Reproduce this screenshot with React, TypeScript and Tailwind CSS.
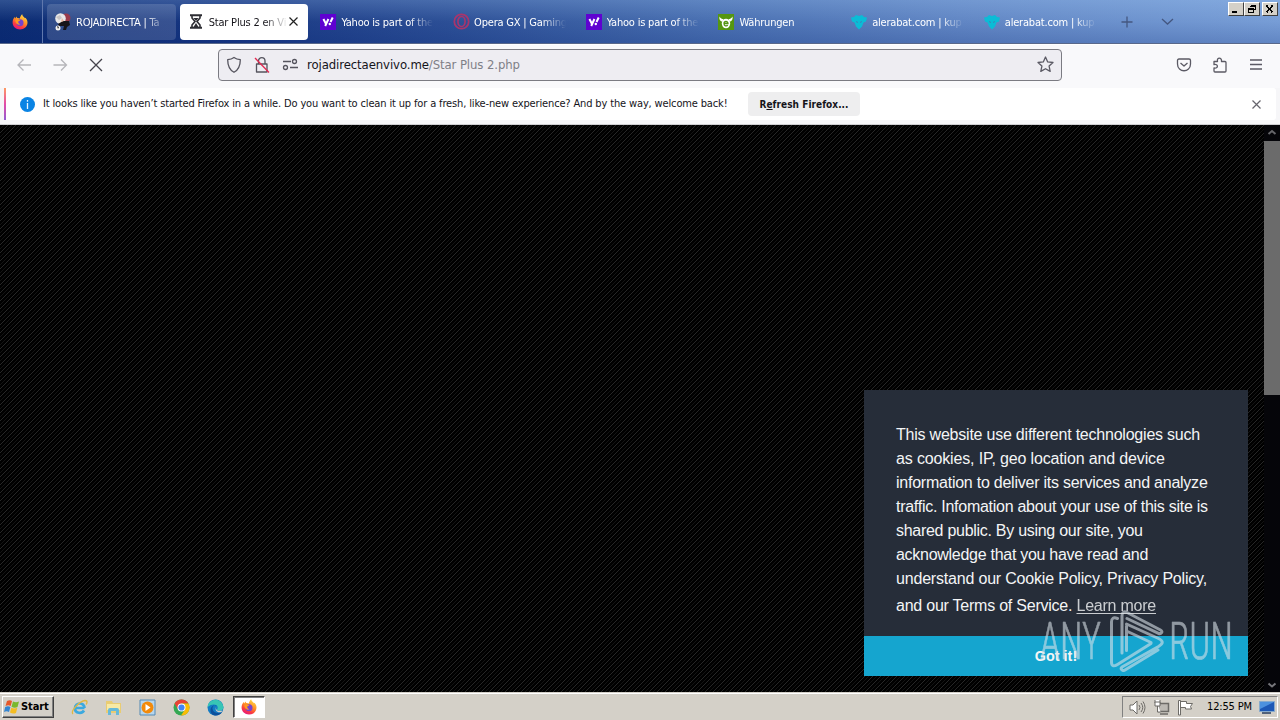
import type { ReactNode } from 'react';

const ui = "font-['DejaVu_Sans_Condensed','DejaVu_Sans',sans-serif] [font-stretch:condensed]";

function FirefoxIcon({ size = 16 }: { size?: number }) {
    return (
        <svg width={size} height={size} viewBox="0 0 16 16">
            <defs>
                <linearGradient id="fox" x1="0.8" y1="0" x2="0.3" y2="1">
                    <stop offset="0" stopColor="#ffe14a" />
                    <stop offset="0.45" stopColor="#ff9226" />
                    <stop offset="0.75" stopColor="#fb3b3f" />
                    <stop offset="1" stopColor="#e31587" />
                </linearGradient>
            </defs>
            <path d="M8 15.6C3.8 15.6.6 12.6.6 8.6.6 6.6 1.3 4.5 2.7 3.1L3.3 4.5 4.3 2.6 5.3 4.1C6.2 3.9 7.2 4.1 7.8 4.6 8.1 3 8.9 1.3 10.2.3 10.4 2.2 12 2.9 13 4.3L13.5 3.7C14.9 5.2 15.5 6.8 15.5 8.6 15.5 12.6 12.2 15.6 8 15.6Z" fill="url(#fox)" />
            <circle cx="8" cy="8.8" r="3.5" fill="#7543cf" />
            <path d="M3.2 6.1C4.6 4.9 6.8 5.1 8.3 6.5L6.5 7.3C5.8 8.3 6.5 10 8.3 10.1 7 11.5 3.3 10.5 3.2 6.1Z" fill="#ff9a1f" />
        </svg>
    );
}

function RojaIcon() {
    return (
        <svg className="shrink-0" width="18" height="18" viewBox="0 0 18 18">
            <circle cx="12" cy="5" r="4.5" fill="#9a3b4b" />
            <circle cx="6.5" cy="5.5" r="5.3" fill="#e9e8e8" />
            <path d="M2 4 6 2 8 5 5 7Z" fill="#c8c4c4" />
            <path d="M4 11 9 8 15 8 16 12 13 14 12 17 9 17 10 13 5 13Z" fill="#171419" />
            <circle cx="4" cy="15" r="2.5" fill="#f2f2f2" />
            <path d="m3 13 2 1-1 2Z" fill="#222" />
            <path d="m8 5 2 3-3 1Z" fill="#eab6a0" />
        </svg>
    );
}

function HourglassIcon() {
    return (
        <svg width="14" height="15" viewBox="0 0 14 15" fill="none" stroke="#2d2d33" strokeWidth="1.6">
            <path d="M1 1.2h12M1 13.8h12" strokeWidth="2" />
            <path d="M3 1.5v2.5L6 7.5 3 11v2.5M11 1.5v2.5L8 7.5l3 3.5v2.5" />
            <path d="M4.5 4h5L7 7Z M7 9l2.5 4h-5Z" fill="#2d2d33" stroke="none" />
        </svg>
    );
}

function YahooIcon() {
    return (
        <svg width="16" height="16" viewBox="0 0 16 16">
            <path fill="#5f01d1" d="M0 0h16v16H0z" />
            <path d="m3.4 5 2.500 4.800m2.500-4.800L5.200 12M12.700 3.500 10.500 8" stroke="#fff" strokeWidth="2" fill="none" />
            <circle cx="9.800" cy="10" r="1.200" fill="#fff" />
        </svg>
    );
}

function OperaIcon() {
    return (
        <svg className="shrink-0" width="17" height="17" viewBox="0 0 17 17" fill="none" stroke="#a8356c">
            <circle cx="8.5" cy="8.5" r="7.2" strokeWidth="1.8" />
            <ellipse cx="8.5" cy="8.5" rx="3.6" ry="5" strokeWidth="1.7" />
        </svg>
    );
}

function BullIcon() {
    return (
        <svg width="16" height="16" viewBox="0 0 16 16">
            <path fill="#559611" d="M0 0h16v16H0z" />
            <path d="M1.500 2.500C1 6 2.500 7.500 4.500 7.500L5.500 5C4 5 2.500 4.500 1.500 2.500ZM14.500 2.500C15 6 13.500 7.500 11.500 7.500L10.500 5C12 5 13.500 4.500 14.500 2.500Z" fill="#fff" />
            <ellipse cx="8" cy="9.500" rx="4.200" ry="4.800" fill="#fff" />
            <path d="M6 9.500h4C10 6.800 6 6.800 6 9.500c0 2.800 2.600 2.800 3.800 1.800" stroke="#559611" strokeWidth="1.300" fill="none" />
        </svg>
    );
}

function AlerabatIcon() {
    return (
        <svg width="16" height="16" viewBox="0 0 16 16">
            <path d="M0 3.500 3 3 5 1 8 2 11 1l2 2 3 .5-1 4-2.500 1-1.500 4L8 15.500 5 12.500l-1.500-4L1 7.500Z" fill="#0bbcd6" />
            <path d="m5 7.500 2 1m4-1L9 8.500" stroke="#3d83bb" strokeWidth="1" />
        </svg>
    );
}

type TabProps = { icon: ReactNode; title: string; state?: 'active' | 'hover' | 'idle' };

const tabs: TabProps[] = [
    { icon: <RojaIcon />, title: 'ROJADIRECTA | Ta', state: 'hover' },
    { icon: <HourglassIcon />, title: 'Star Plus 2 en Vi', state: 'active' },
    { icon: <YahooIcon />, title: 'Yahoo is part of the' },
    { icon: <OperaIcon />, title: 'Opera GX | Gaming' },
    { icon: <YahooIcon />, title: 'Yahoo is part of the' },
    { icon: <BullIcon />, title: 'Währungen' },
    { icon: <AlerabatIcon />, title: 'alerabat.com | kup' },
    { icon: <AlerabatIcon />, title: 'alerabat.com | kup' },
];

function Tab({ icon, title, state = 'idle' }: TabProps) {
    const look = {
        active: 'bg-white text-[#15141a]',
        hover: 'bg-white/15 text-white',
        idle: 'text-white',
    }[state];
    return (
        <div className={`flex h-9 w-[128.7px] shrink-0 items-center rounded-[4px] pl-2 ${look}`}>
            <span className="flex w-4 shrink-0 items-center justify-center">{icon}</span>
            <span className={`ml-[5px] pt-[3px] whitespace-nowrap text-[11px] tracking-[-0.2px] ${state === 'active' ? 'w-[79px] [mask-image:linear-gradient(90deg,#000_70%,transparent)]' : 'w-[92px] [mask-image:linear-gradient(90deg,#000_74%,transparent)]'}`}>
                {title}
            </span>
            {state === 'active' && (
                <svg className="ml-px shrink-0" width="9" height="9" viewBox="0 0 9 9" stroke="#222" strokeWidth="1.2">
                    <path d="m.5.5 8 8m0-8-8 8" />
                </svg>
            )}
        </div>
    );
}

function WindowButton({ children }: { children: ReactNode }) {
    return (
        <span className="flex h-[14px] w-4 items-center justify-center border border-t-white border-l-white border-r-[#404040] border-b-[#404040] bg-[#d4d0c8]">
            <svg width="12" height="11" viewBox="0 0 12 11" fill="none" stroke="#000" shapeRendering="crispEdges">{children}</svg>
        </span>
    );
}

function TabBar() {
    return (
        <div className="relative flex h-11 items-center border-b border-[#59688a] bg-[linear-gradient(180deg,rgba(175,215,255,0.22),transparent_50%,rgba(0,30,110,0.18)),linear-gradient(90deg,#0b2b72_0%,#183782_18%,#2c4f96_35%,#486eb0_55%,#6186c4_75%,#779dd6_100%)]">
            <div className="flex h-full w-[43px] items-center justify-center border-r border-[#6078ad] pr-[3px]">
                <FirefoxIcon />
            </div>
            <div className="ml-1 flex gap-1">
                {tabs.map((tab, i) => <Tab key={i} {...tab} />)}
            </div>
            <svg className="ml-4" width="54" height="14" viewBox="0 0 54 14" fill="none" stroke="#445780" strokeWidth="1.3">
                <path d="M6 1.5v11M.5 7h11M41 4l5.500 5L52 4" />
            </svg>
            <div className="absolute top-[2px] right-[2px] flex">
                <WindowButton><path d="M2 8h5" strokeWidth="2" /></WindowButton>
                <WindowButton><path d="M4.500 1.500h5v4h-2M2.500 4.500h5v4h-5zM4 2h6M2 5h6" /></WindowButton>
                <span className="w-[2px]" />
                <WindowButton><path d="m2.500 1.500 6 7m0-7-6 7" strokeWidth="1.7" /></WindowButton>
            </div>
        </div>
    );
}

function UrlBar() {
    return (
        <div className="flex h-8 w-[844px] items-center rounded-[4px] border border-[#7b7b82] bg-[#eeedf2] pl-2 pr-[7px]">
            <svg width="78" height="18" viewBox="0 0 78 18" fill="none" stroke="#55545e" strokeWidth="1.3" strokeLinejoin="round">
                <path d="M7 1.5c2 1.500 4 2 6.300 2.200 0 5.500-1.500 10-6.300 12.600C2.200 13.700.7 9.200.7 3.700 3 3.500 5 3 7 1.500Z" />
                <path d="M29.5 8h10.500v8h-10.500zM31.500 8V5c0-4.500 6.500-4.500 6.500 0v3" />
                <path d="m28 2 14 14.500" stroke="#e22850" />
                <path d="M56 5.500h8M63 11.500h8" />
                <circle cx="67.500" cy="5.500" r="2" />
                <circle cx="58.500" cy="11.500" r="2" />
            </svg>
            <span className="ml-[2px] flex-1 text-[13px] tracking-[-0.09px] text-[#7f7f87]">
                <span className="text-[#15141a]">rojadirectaenvivo.me</span>/Star Plus 2.php
            </span>
            <svg width="17" height="17" viewBox="0 0 17 17" fill="none" stroke="#5b5a64" strokeWidth="1.3" strokeLinejoin="round">
                <path d="m8.500 1 2.200 4.900 5.300.6-3.900 3.600 1.100 5.300-4.700-2.700-4.700 2.700 1.100-5.300L1 6.500l5.300-.6Z" />
            </svg>
        </div>
    );
}

function Toolbar() {
    return (
        <div className="flex h-11 items-center border-t border-white bg-[#f9f9fb] pr-[17px] pb-[4px] pl-[17px]">
            <svg width="86" height="14" viewBox="0 0 86 14" fill="none" stroke="#b6b6ba" strokeWidth="1.3">
                <path d="M14 7H1m5.500-5.500L1 7l5.500 5.500M36.500 7h13M44 1.500 49.500 7 44 12.500" />
                <path d="m73 1 12 12m0-12L73 13" stroke="#45444c" />
            </svg>
            <div className="ml-[115px]"><UrlBar /></div>
            <svg className="ml-auto" width="87" height="18" viewBox="0 0 87 18" fill="none" stroke="#5b5a64" strokeWidth="1.3" strokeLinejoin="round">
                <path d="M1.500 4.500Q1.500 3 3 3h10Q14.500 3 14.500 4.500V8C14.500 17 1.500 17 1.500 8ZM4.500 7 8 10 11.500 7" />
                <path d="M38 5.500h3.500C40.500 1 46 1 45.500 5.500H49q1 0 1 1V15q0 1-1 1H39q-1 0-1-1v-3c4.500 1 4.500-4.500 0-3.500Z" />
                <path d="M74 4h12M74 8.500h12M74 13h12" />
            </svg>
        </div>
    );
}

function Notification() {
    return (
        <div className="h-[37px] border-b border-[#cfcfd2] bg-[#f6f6f8] pr-1 pl-1">
            <div className="flex h-8 items-center rounded-[3px] bg-white">
                <span className="h-8 w-[2px] bg-[linear-gradient(#ff9a62,#e34ca8,#925bd1)]" />
                <svg className="ml-[14px]" width="15" height="15" viewBox="0 0 15 15">
                    <circle cx="7.500" cy="7.500" r="7.500" fill="#0a84e4" />
                    <path d="M7.500 3v1.800M7.500 6v6" stroke="#e9f6ff" strokeWidth="1.3" />
                </svg>
                <span className="ml-2 w-[705px] whitespace-nowrap text-[11px] tracking-[-0.145px] text-[#15141a]">
                    It looks like you haven’t started Firefox in a while. Do you want to clean it up for a fresh, like-new experience? And by the way, welcome back!
                </span>
                <button className="h-6 w-28 shrink-0 rounded-[4px] bg-[#eeeeef] text-[10px] font-bold tracking-[0.04px] text-[#15141a]">
                    R<u>e</u>fresh Firefox...
                </button>
                <svg className="mr-[15px] ml-auto" width="9" height="9" viewBox="0 0 9 9" stroke="#66656d" strokeWidth="1.2">
                    <path d="m.5.5 8 8m0-8-8 8" />
                </svg>
            </div>
        </div>
    );
}

const cookieLines = [
    { text: 'This website use different technologies such', tracking: 'tracking-[-0.22px]' },
    { text: 'as cookies, IP, geo location and device', tracking: 'tracking-[-0.15px]' },
    { text: 'information to deliver its services and analyze', tracking: 'tracking-[-0.24px]' },
    { text: 'traffic. Infomation about your use of this site is', tracking: 'tracking-[-0.27px]' },
    { text: 'shared public. By using our site, you', tracking: 'tracking-[-0.28px]' },
    { text: 'acknowledge that you have read and', tracking: 'tracking-[-0.28px]' },
    { text: 'understand our Cookie Policy, Privacy Policy,', tracking: 'tracking-[-0.19px]' },
];

function CookieNotice() {
    return (
        <div className="absolute top-[265px] left-[864px] w-96 bg-[#262d39] font-['Liberation_Sans',Arial,sans-serif] text-base text-[#f4f5f6]">
            <div className="h-[246px] px-8 pt-[33px] leading-6 whitespace-nowrap">
                {cookieLines.map((line) => <p key={line.text} className={line.tracking}>{line.text}</p>)}
                <p className="pt-[3px] tracking-[-0.23px]">and our Terms of Service. <a className="underline underline-offset-2 opacity-80">Learn more</a></p>
            </div>
            <button className="block h-10 w-full bg-[#15a5cf] pt-px text-[14.4px] font-bold">Got it!</button>
        </div>
    );
}

function Watermark() {
    return (
        <svg className="absolute top-[484px] left-[1038px] font-['Roboto',sans-serif] text-[#d9e2e8] opacity-60" width="196" height="66" viewBox="0 0 196 66" fill="none" stroke="currentColor" strokeWidth="3" strokeLinejoin="round" strokeLinecap="round">
            <g fill="currentColor" strokeWidth="0.6" fontSize="51" fontWeight="300">
                <text x="2" y="50" textLength="61" lengthAdjust="spacingAndGlyphs">ANY</text>
                <text x="131" y="50" textLength="64" lengthAdjust="spacingAndGlyphs">RUN</text>
            </g>
            <path d="M79.500 9.500c-4-1.500-6-.5-6 3.500v40c0 4 2 5 6 2.500L113 34.500M84 44V7c0-4 2-5 5-3.500L122.500 21c3 1.600.5 4.500-2 3.300L89 9.500M88.500 17v24.500M88.500 22 113 33.500M84 58l36.500-20.500c5-3 5-5.500 0-8L88.500 15M84 58c-2 2 .5 4.500 3 3l33-20" />
        </svg>
    );
}

function Page() {
    return (
        <main className="relative flex h-[567px] justify-end bg-black">
            <svg className="absolute inset-0" width="1264" height="567">
                <defs>
                    <pattern id="stripes" width="8" height="8" patternUnits="userSpaceOnUse" shapeRendering="crispEdges">
                        <path d="M7 0h1v1H7zM6 1h1v1H6zM5 2h1v1H5zM4 3h1v1H4zM3 4h1v1H3zM2 5h1v1H2zM1 6h1v1H1zM0 7h1v1H0z" fill="#272727" />
                        <path d="M3 0h1v1H3zM2 1h1v1H2zM1 2h1v1H1zM0 3h1v1H0zM7 4h1v1H7zM6 5h1v1H6zM5 6h1v1H5zM4 7h1v1H4z" fill="#131313" />
                    </pattern>
                </defs>
                <rect width="1264" height="567" fill="url(#stripes)" />
            </svg>
            <div className="flex w-4 flex-col items-center bg-[#050509]">
                <svg width="16" height="16" viewBox="0 0 16 16" fill="none" stroke="#66666a" strokeWidth="2"><path d="m4.500 9 3.500-3 3.500 3" /></svg>
                <div className="h-[254px] w-4 bg-[#6b6b6b]" />
                <svg className="mt-auto" width="16" height="16" viewBox="0 0 16 16" fill="none" stroke="#77777b" strokeWidth="2"><path d="m4.500 7.500 3.500 3 3.500-3" /></svg>
            </div>
            <CookieNotice />
            <Watermark />
        </main>
    );
}

function QuickLaunch() {
    return (
        <>
            <svg width="17" height="17" viewBox="0 0 17 17" fill="none">
                <path d="M13.500 9H5M13.500 9C13.500 3 4 3 4 9.200 4 14.800 11 15 13 11.500" stroke="#3ba9df" strokeWidth="2.7" />
                <path d="M2 15C-1 12 9 2 14 1.500c3 0 2 3 1 4" stroke="#e0b742" strokeWidth="1.3" />
            </svg>
            <svg width="17" height="17" viewBox="0 0 17 17">
                <path d="M1 2h6l1 2h8v10H1z" fill="#e9cc73" /><path d="M2 5h13v6H2z" fill="#f8e9a5" />
                <path d="M3 16v-5q0-2 2-2h7q2 0 2 2v5h-3v-4H6v4z" fill="#67b9d9" />
            </svg>
            <svg width="17" height="17" viewBox="0 0 17 17">
                <path d="M1 1h15v15H1z" fill="#b7d6ed" stroke="#558ab5" /><circle cx="8.500" cy="8.500" r="6" fill="#f28a0b" /><path d="m6.500 5 5 3.500-5 3.500Z" fill="#fff" />
            </svg>
            <svg width="17" height="17" viewBox="0 0 17 17">
                <circle cx="8.500" cy="8.500" r="8" fill="#34a853" />
                <path d="M1.600 4.500A8 8 0 0 1 15.400 4.500H8.500L5 10.500Z" fill="#e94235" />
                <path d="M8.500 4.500h6.900A8 8 0 0 1 8 16.500L12 10.500Z" fill="#fbbc05" />
                <circle cx="8.500" cy="8.500" r="4" fill="#fff" /><circle cx="8.500" cy="8.500" r="3.100" fill="#4285f4" />
            </svg>
            <svg width="17" height="17" viewBox="0 0 17 17">
                <circle cx="8.500" cy="8.500" r="8" fill="#137bc4" />
                <path d="M.6 8C1 0 14-3 16.500 8c0 4-5 4.500-6.500 2.500C13 6 6 3 .6 8Z" fill="#38c5b5" />
                <path d="M10 7c-2-2-5 0-4.500 3 .6 4 6 5 9.500 3-2 4-8 5-11 1C2 9 6 5 10 7Z" fill="#0d509c" />
                <path d="M9.500 7.500c-1.500 2 0 5.500 6 4l-1 1.500c-4 1.500-7.500-2-5-5.500Z" fill="#d4d0c8" />
            </svg>
        </>
    );
}

function Taskbar() {
    return (
        <footer className="flex h-7 items-center bg-[#d4d0c8] pt-[2px] pr-[2px] pl-[2px] text-black shadow-[inset_0_1px_0_#d4d0c8,inset_0_2px_0_#fff]">
            <button className="flex h-[22px] w-[52px] items-center border border-t-white border-l-white border-r-[#404040] border-b-[#404040] pl-px text-[11px] font-bold tracking-[-0.1px] shadow-[inset_-1px_-1px_0_#808080]">
                <svg className="mr-px shrink-0" width="16" height="16" viewBox="0 0 16 16">
                    <path d="M3 2q3-1.500 5 0L6.700 7Q4.500 5.600 1.500 7Z" fill="#e65829" />
                    <path d="M9 2.500q3 1.600 6 0L13.500 8q-3 1.400-6-.3Z" fill="#7ab82c" />
                    <path d="M1.200 8q3-1.500 5.200 0L5 13Q2.500 11.500 0 13Z" fill="#3485d1" />
                    <path d="M7.300 8.700q3 1.500 6 0L12 14q-3 1.400-6-.5Z" fill="#f5bd22" />
                </svg>
                Start
            </button>
            <div className="ml-[17px] flex items-center gap-[17px]">
                <QuickLaunch />
            </div>
            <div className="ml-[9px] flex h-[22px] w-8 items-center justify-center border border-t-[#404040] border-l-[#404040] border-r-white border-b-white bg-white shadow-[inset_1px_1px_0_#808080]">
                <FirefoxIcon />
            </div>
            <div className="ml-auto flex h-[22px] w-[156px] items-center border border-t-[#808080] border-l-[#808080] border-r-white border-b-white pl-[6px] text-[11px]">
                <svg width="66" height="17" viewBox="0 0 66 17" fill="#fff" stroke="#6d6b67">
                    <path d="M1 6h3l4-4v13l-4-4H1Z" /><path d="M10 6q2 2.500 0 5M12 4q3.500 4.500 0 9M14 2.500q4 6 0 12" fill="none" />
                    <path d="M29.500 4.500h10v8h-10zM31 15h8" fill="#bcb9b3" strokeWidth="1.5" /><path d="M26 1v3h5V1M28.500 4v9h3" /><path d="M26 3h5v4h-5z" />
                    <path d="M49.500 1.500h2V16h-2zM51.500 2.500h6v2h6l-2 3 1 2.500h-6v-1.500h-5z" />
                </svg>
                <span className="ml-[12px] w-[48px] whitespace-nowrap tracking-[-0.15px]">12:55 PM</span>
                <svg className="ml-auto mr-[2px]" width="16" height="15" viewBox="0 0 16 15">
                    <path d="M.5 1.500h15v10H.5z" fill="#1d58b6" stroke="#86aacd" /><path d="M1 2h14L1 9Z" fill="#4c91df" /><path d="M3 13h9" stroke="#52627a" strokeWidth="2" />
                </svg>
            </div>
        </footer>
    );
}

export default function App() {
    return (
        <div className={`h-[720px] w-[1280px] overflow-hidden ${ui}`}>
            <TabBar />
            <Toolbar />
            <Notification />
            <Page />
            <Taskbar />
        </div>
    );
}
